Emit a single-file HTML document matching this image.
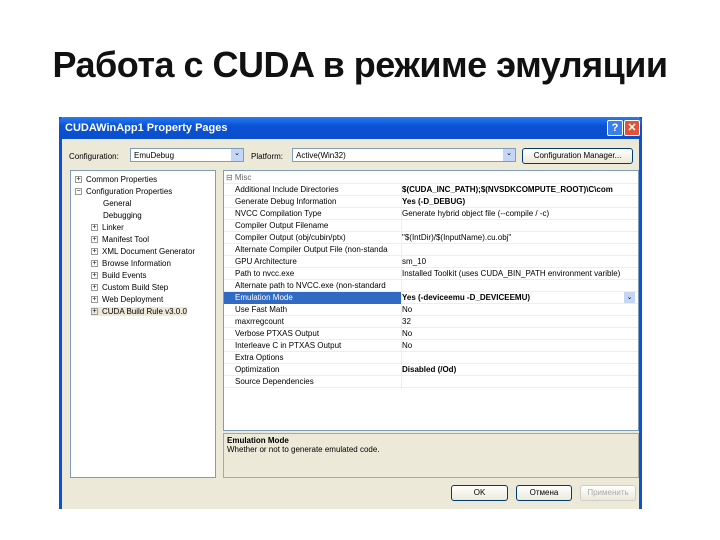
<!DOCTYPE html>
<html><head><meta charset="utf-8"><style>
*{margin:0;padding:0;box-sizing:border-box}
body{width:720px;height:540px;background:#fff;position:relative;overflow:hidden;font-family:"Liberation Sans",sans-serif}
.t{position:absolute;left:0;width:720px;top:44px;text-align:center;font-size:36px;font-weight:bold;color:#111;letter-spacing:-0.5px}
.win{position:absolute;left:59px;top:117px;width:583px;height:392px;background:#ece9d8;border-left:3px solid #0a52d6;border-right:3px solid #0a52d6}
.tb{position:absolute;left:-3px;top:0;width:583px;height:22px;background:linear-gradient(#2a7cf0,#0a52d6 40%,#0a4ec8);color:#fff;font-size:11px;font-weight:bold;padding:5px 6px;border-radius:5px 5px 0 0}
.ab{position:absolute;font-size:8px;color:#000;white-space:nowrap}
.box{position:absolute;background:#fff;border:1px solid #7f9db9}
.btn{position:absolute;height:16px;border:1px solid #003c74;border-radius:3px;background:linear-gradient(#fff,#ece9d8);font-size:8px;text-align:center;line-height:14px}
.tree div{position:absolute;font-size:8px;white-space:nowrap}
.pl{display:inline-block;width:7px;height:7px;border:1px solid #999;margin-right:4px;font-size:7px;line-height:5px;text-align:center;vertical-align:middle}
.row{position:absolute;left:0;width:414px;height:12px;border-bottom:1px solid #eee;font-size:8px;line-height:12px}
.row span{position:absolute;left:11px}
.row b,.row i{position:absolute;left:178px;font-style:normal}
.sel{background:#316ac5;color:#fff}
</style></head><body>
<div class="t">Работа с CUDA в режиме эмуляции</div>
<div class="win">
<div class="tb">CUDAWinApp1 Property Pages
<div style="position:absolute;right:19px;top:3px;width:16px;height:16px;background:#3a80f0;border:1px solid #fff;border-radius:2px;text-align:center;font-size:11px;line-height:14px">?</div>
<div style="position:absolute;right:2px;top:3px;width:16px;height:16px;background:#e0553a;border:1px solid #fff;border-radius:2px;text-align:center;font-size:11px;line-height:14px">✕</div>
</div>
<div class="ab" style="left:7px;top:35px">Configuration:</div>
<div class="box" style="left:68px;top:31px;width:114px;height:14px;font-size:8px;padding:2px 3px">EmuDebug<div style="position:absolute;right:0;top:0;width:12px;height:12px;background:#c5d5f5;font-size:7px;text-align:center">⌄</div></div>
<div class="ab" style="left:189px;top:35px">Platform:</div>
<div class="box" style="left:230px;top:31px;width:224px;height:14px;font-size:8px;padding:2px 3px">Active(Win32)<div style="position:absolute;right:0;top:0;width:12px;height:12px;background:#c5d5f5;font-size:7px;text-align:center">⌄</div></div>
<div class="btn" style="left:460px;top:31px;width:111px">Configuration Manager...</div>
<div class="box tree" style="left:8px;top:53px;width:146px;height:308px">
<div style="left:4px;top:4px"><span class="pl">+</span>Common Properties</div>
<div style="left:4px;top:16px"><span class="pl">−</span>Configuration Properties</div>
<div style="left:32px;top:28px">General</div>
<div style="left:32px;top:40px">Debugging</div>
<div style="left:20px;top:52px"><span class="pl">+</span>Linker</div>
<div style="left:20px;top:64px"><span class="pl">+</span>Manifest Tool</div>
<div style="left:20px;top:76px"><span class="pl">+</span>XML Document Generator</div>
<div style="left:20px;top:88px"><span class="pl">+</span>Browse Information</div>
<div style="left:20px;top:100px"><span class="pl">+</span>Build Events</div>
<div style="left:20px;top:112px"><span class="pl">+</span>Custom Build Step</div>
<div style="left:20px;top:124px"><span class="pl">+</span>Web Deployment</div>
<div style="left:20px;top:136px;background:#ece9d8"><span class="pl">+</span>CUDA Build Rule v3.0.0</div>
</div>
<div class="box" style="left:161px;top:53px;width:416px;height:261px;overflow:hidden">
<div class="row" style="top:1px;color:#666"><span style="left:2px">⊟ Misc</span></div>
<div class="row" style="top:13px"><span>Additional Include Directories</span><b>$(CUDA_INC_PATH);$(NVSDKCOMPUTE_ROOT)\C\com</b></div>
<div class="row" style="top:25px"><span>Generate Debug Information</span><b>Yes (-D_DEBUG)</b></div>
<div class="row" style="top:37px"><span>NVCC Compilation Type</span><i>Generate hybrid object file (--compile / -c)</i></div>
<div class="row" style="top:49px"><span>Compiler Output Filename</span></div>
<div class="row" style="top:61px"><span>Compiler Output (obj/cubin/ptx)</span><i>"$(IntDir)/$(InputName).cu.obj"</i></div>
<div class="row" style="top:73px"><span>Alternate Compiler Output File (non-standa</span></div>
<div class="row" style="top:85px"><span>GPU Architecture</span><i>sm_10</i></div>
<div class="row" style="top:97px"><span>Path to nvcc.exe</span><i>Installed Toolkit (uses CUDA_BIN_PATH environment varible)</i></div>
<div class="row" style="top:109px"><span>Alternate path to NVCC.exe (non-standard</span></div>
<div class="row" style="top:121px"><span class="sel" style="left:0;width:177px;padding-left:11px;height:12px">Emulation Mode</span><b>Yes (-deviceemu -D_DEVICEEMU)</b><div style="position:absolute;right:3px;top:0;width:11px;height:11px;background:#c5d5f5;font-size:7px;text-align:center">⌄</div></div>
<div class="row" style="top:133px"><span>Use Fast Math</span><i>No</i></div>
<div class="row" style="top:145px"><span>maxrregcount</span><i>32</i></div>
<div class="row" style="top:157px"><span>Verbose PTXAS Output</span><i>No</i></div>
<div class="row" style="top:169px"><span>Interleave C in PTXAS Output</span><i>No</i></div>
<div class="row" style="top:181px"><span>Extra Options</span></div>
<div class="row" style="top:193px"><span>Optimization</span><b>Disabled (/Od)</b></div>
<div class="row" style="top:205px"><span>Source Dependencies</span></div>
<div style="position:absolute;left:177px;top:13px;width:1px;height:205px;background:#eee"></div>
</div>
<div style="position:absolute;left:161px;top:316px;width:416px;height:45px;border:1px solid #aca899;font-size:8px;padding:2px 3px"><b>Emulation Mode</b><br>Whether or not to generate emulated code.</div>
<div class="btn" style="left:389px;top:368px;width:57px">OK</div>
<div class="btn" style="left:454px;top:368px;width:56px">Отмена</div>
<div class="btn" style="left:518px;top:368px;width:56px;color:#aaa;border-color:#ccc">Применить</div>
</div>
</body></html>
